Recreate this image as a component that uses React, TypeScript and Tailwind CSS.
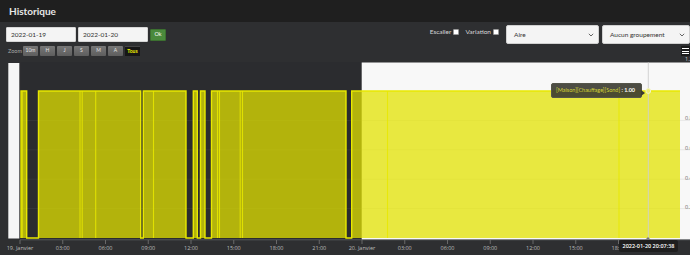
import React from "react";

// step segments where the sensor is on (x in px)
const ON: [number, number][] = [
  [21, 26.7],
  [38.5, 140.7],
  [143.3, 186],
  [193.3, 197.3],
  [200.5, 205],
  [211.5, 346],
  [351.7, 680],
];

// short toggles drawn inside the filled areas
const MARKS = [22.2, 80, 82.2, 95.7, 153.5, 217.5, 219.5, 240.2, 242.5, 387.5, 619];

const TICKS = [
  "19. Janvier", "03:00", "06:00", "09:00", "12:00", "15:00", "18:00", "21:00",
  "20. Janvier", "03:00", "06:00", "09:00", "12:00", "15:00", "18:00",
];

const GRID = [120.4, 149.8, 179.2, 208.6];
const Y_LABELS: [number, string][] = [[120, "0.8"], [150, "0.6"], [179.5, "0.4"], [209, "0.2"]];

const TOP = 91;
const BOTTOM = 238;

function linePath() {
  let d = `M${ON[0][0]},${BOTTOM}`;
  ON.forEach(([a, b], i) => {
    if (i > 0) d += ` H${a}`;
    d += ` V${TOP} H${b}`;
    if (i < ON.length - 1) d += ` V${BOTTOM}`;
  });
  return d;
}

function Chevron() {
  return (
    <svg width="6" height="4" viewBox="0 0 6 4" className="shrink-0">
      <path d="M0.8 0.8 L3 3 L5.2 0.8" fill="none" stroke="#555" strokeWidth="0.9" />
    </svg>
  );
}

function FakeSelect({ label, w }: { label: string; w: string }) {
  return (
    <div className={`${w} h-[19px] shrink-0 bg-[#f4f4f4] border border-[#d0d0d0] rounded-[2px] flex items-center justify-between pl-[7px] pr-[4px]`}>
      <span className="text-[6.5px] text-[#333]">{label}</span>
      <Chevron />
    </div>
  );
}

function Check({ label }: { label: string }) {
  return (
    <div className="flex items-center gap-[2px]">
      <span className="text-[6.5px] text-[#d8d8d8]">{label}</span>
      <span className="w-[6px] h-[6px] bg-white border border-[#999] rounded-[1px]" />
    </div>
  );
}

function Chart() {
  return (
    <div className="relative h-[195px] w-[690px] mt-[4px]">
      <svg width="690" height="195" viewBox="0 60 690 195" className="overflow-visible block">
        {/* backgrounds */}
        <rect x="8.3" y="63" width="11" height="175.5" fill="#f6f6f6" />
        <rect x="20.7" y="62" width="341" height="178" fill="#2b2c2f" />
        <rect x="361.7" y="62.5" width="330" height="177.5" fill="#f8f8f8" />

        {/* grid */}
        {GRID.map((y) => (
          <line key={y} x1="20.7" x2="690" y1={y} y2={y} stroke="#808080" strokeOpacity="0.18" strokeWidth="0.8" />
        ))}

        {/* area */}
        {ON.map(([a, b]) => (
          <rect key={a} x={a} y={TOP} width={b - a} height={BOTTOM - TOP} fill="#e2e200" fillOpacity="0.74" />
        ))}
        {MARKS.map((x) => (
          <line key={x} x1={x} x2={x} y1={TOP} y2={BOTTOM} stroke="#e8e800" strokeWidth="1.1" strokeOpacity="0.85" />
        ))}
        <path d={linePath()} fill="none" stroke="#e8e800" strokeWidth="1.4" />

        {/* x axis */}
        <line x1="20" x2="690" y1="239.8" y2="239.8" stroke="#55575a" strokeWidth="1" />
        {TICKS.map((t, i) => {
          const x = 20 + i * 42.75;
          return (
            <g key={i}>
              <line x1={x} x2={x} y1="240" y2="244" stroke="#777" strokeWidth="0.8" />
              <text x={x} y="249.8" textAnchor="middle" fontSize="5.5" fill="#bdbdbd" fontFamily="'Open Sans', sans-serif">
                {t}
              </text>
            </g>
          );
        })}

        {/* y axis labels (clipped at the right edge) */}
        <text x="685" y="60.5" fontSize="5.5" fill="#cfcfcf" fontFamily="'Open Sans', sans-serif">1.2</text>
        {Y_LABELS.map(([y, l]) => (
          <text key={l} x="685" y={y} fontSize="5.5" fill="#666" fontFamily="'Open Sans', sans-serif">{l}</text>
        ))}

        {/* crosshair + hovered point */}
        <line x1="648.3" x2="648.3" y1="62.5" y2="239.5" stroke="#cfcfcf" strokeWidth="0.9" />
        <circle cx="648.3" cy="91" r="2.4" fill="#eded70" stroke="#f4f4c8" strokeWidth="1" />
      </svg>

      {/* series tooltip */}
      <div className="absolute left-[551px] top-[23px] w-[91px] h-[15px] bg-[#3a3a30]/90 border border-[#55554a] rounded-[2px] flex items-center pl-[4px] whitespace-nowrap">
        <span className="text-[5.5px] text-[#d4d43a]">[Maison][Chauffage][Sond]</span>
        <span className="text-[5.5px] text-white font-bold">&nbsp;: 1.00</span>
        <span className="absolute right-[-4px] top-[6px] w-0 h-0 border-y-[3px] border-y-transparent border-l-[4px] border-l-[#3a3a30]" />
      </div>

      {/* x crosshair label */}
      <div className="absolute left-[619px] top-[180px] w-[59px] h-[12px] bg-[#1e1e1e]/95 rounded-[2px] flex items-center justify-center">
        <span className="text-[5.5px] font-semibold text-white font-['Open_Sans',sans-serif] whitespace-nowrap">2022-01-20 20:07:38</span>
        <span className="absolute left-[26px] top-[-3px] w-0 h-0 border-x-[3px] border-x-transparent border-b-[3px] border-b-[#777]" />
      </div>
    </div>
  );
}

export default function App() {
  const zooms = ["10m", "H", "J", "S", "M", "A"];
  return (
    <div className="w-[690px] h-[255px] overflow-hidden bg-[#2e2f31] font-['Lato',sans-serif]">
      {/* header */}
      <div className="h-[22px] bg-[#1f1f1f] flex items-center pl-[9px]">
        <span className="text-[10px] font-bold text-[#e6e6e6]">Historique</span>
      </div>

      {/* controls */}
      <div className="flex items-center pt-[3px] pl-[6px] h-[22px]">
        <div className="flex items-center gap-[2px]">
          <div className="w-[70px] h-[15px] bg-[#f4f4f4] border border-[#d6d6d6] rounded-[1px] flex items-center pl-[4px] text-[6.5px] text-[#333]">
            2022-01-19
          </div>
          <div className="w-[70px] h-[15px] bg-[#f4f4f4] border border-[#d6d6d6] rounded-[1px] flex items-center pl-[4px] text-[6.5px] text-[#333]">
            2022-01-20
          </div>
          <div className="w-[16px] h-[12px] bg-[#4a8a3c] border border-[#3c7030] rounded-[1px] flex items-center justify-center text-[5.5px] text-white">
            Ok
          </div>
        </div>
        <div className="ml-auto flex items-center">
          <div className="flex items-center gap-[6px] self-start mt-[2px]">
            <Check label="Escaller" />
            <Check label="Variation" />
          </div>
          <div className="ml-[7px] flex items-center gap-[3px]">
            <FakeSelect label="Aire" w="w-[93px]" />
            <FakeSelect label="Aucun groupement" w="w-[88px]" />
          </div>
        </div>
      </div>

      {/* zoom row */}
      <div className="flex items-center mt-[2px] h-[10px] pl-[8px]">
        <span className="text-[5.5px] text-[#aaa] mr-[1px]">Zoom</span>
        <div className="flex gap-[2px]">
          {zooms.map((z) => (
            <div key={z} className="w-[15px] h-[10px] bg-gradient-to-b from-[#777] to-[#5e5e5e] rounded-[1px] flex items-center justify-center text-[5px] text-[#e4e4e4]">
              {z}
            </div>
          ))}
          <div className="w-[15px] h-[10px] bg-[#161616] border-t border-[#444] flex items-center justify-center text-[5px] font-bold text-[#f0f000]">
            Tous
          </div>
        </div>
        <div className="ml-auto w-[9px] h-[10px] bg-[#1c1c1c] flex flex-col justify-center gap-[1.5px] px-[1px]">
          <span className="h-[1px] bg-white" />
          <span className="h-[1px] bg-white" />
          <span className="h-[1px] bg-white" />
        </div>
      </div>

      <Chart />
    </div>
  );
}
